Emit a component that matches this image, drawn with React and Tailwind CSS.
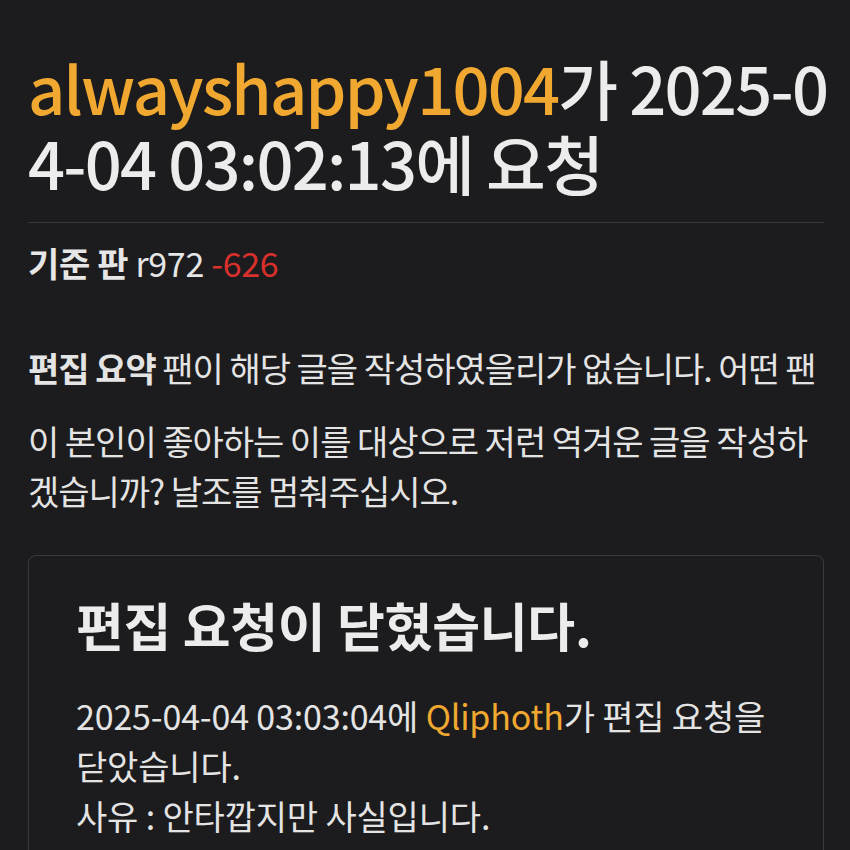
export default function App() {
  const font = { fontFamily: "'Noto Sans CJK KR', 'Noto Sans', sans-serif" };
  return (
    <div className="min-h-[850px] w-[850px] overflow-hidden bg-[#1c1c1e] pl-[28px] pr-[26px] pt-[50px] text-[#e6e6e6]" style={font}>
      <h1 className="text-[65px] font-medium leading-[75px] tracking-[-0.027em] text-[#ececec]">
        <div className="whitespace-nowrap">
          <span className="text-[#f0a830]">alwayshappy1004</span>가 2025-0
        </div>
        <div className="whitespace-nowrap">4-04 03:02:13에 요청</div>
      </h1>
      <div className="mt-[22px] h-px bg-[#38383a]" />
      <div className="mt-[20px] whitespace-nowrap text-[34px] leading-[40px] tracking-[-0.01em]">
        <span className="font-bold">기준 판</span> r972 <span className="text-[#d8302c]">-626</span>
      </div>
      <div className="mt-[60px] text-[34px] leading-[50px] tracking-[-0.03em] text-[#e4e4e4]">
        <div className="whitespace-nowrap">
          <span className="font-bold">편집 요약</span> 팬이 해당 글을 작성하였을리가 없습니다. 어떤 팬
        </div>
        <div className="mt-[23px] whitespace-nowrap">이 본인이 좋아하는 이를 대상으로 저런 역겨운 글을 작성하</div>
        <div className="whitespace-nowrap">겠습니까? 날조를 멈춰주십시오.</div>
      </div>
      <div className="mt-[39px] rounded-[8px] border border-[#3a3a3c] px-[47px] pt-[41px] pb-[30px]">
        <div className="whitespace-nowrap text-[52px] font-bold leading-[56px] tracking-[-0.005em] text-[#ececec]">
          편집 요청이 닫혔습니다.
        </div>
        <div className="mt-[38px] text-[34px] leading-[50px] tracking-[-0.005em] text-[#e4e4e4]">
          <div className="whitespace-nowrap">
            2025-04-04 03:03:04에 <span className="text-[#f0a830]">Qliphoth</span>가 편집 요청을
          </div>
          <div className="whitespace-nowrap">닫았습니다.</div>
          <div className="whitespace-nowrap">사유 : 안타깝지만 사실입니다.</div>
        </div>
      </div>
    </div>
  );
}
